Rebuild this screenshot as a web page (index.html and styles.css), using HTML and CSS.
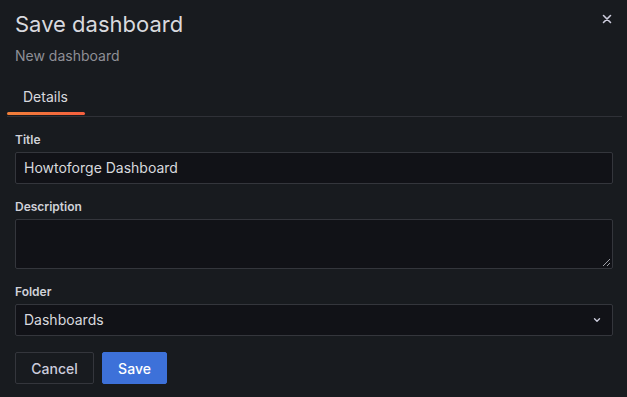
FILE: index.html
```html
<!DOCTYPE html>
<html>
<head>
<meta charset="utf-8">
<link rel="stylesheet" href="styles.css">
</head>
<body>
<div class="modal">
  <div class="header">
    <div class="heading">
      <h1 class="title">Save dashboard</h1>
      <div class="subtitle">New dashboard</div>
    </div>
    <button class="close" aria-label="Close">
      <svg width="10" height="10" viewBox="0 0 10 10"><path d="M1.5 1.5 L8.5 8.5 M8.5 1.5 L1.5 8.5" stroke="#ccccdc" stroke-width="1.6" stroke-linecap="round"/></svg>
    </button>
  </div>
  <div class="tabs">
    <div class="tab active">Details</div>
  </div>
  <form class="form">
    <div class="field">
      <label class="label">Title</label>
      <div class="input">Howtoforge Dashboard</div>
    </div>
    <div class="field">
      <label class="label">Description</label>
      <div class="textarea">
        <svg class="resize" width="10" height="10" viewBox="0 0 10 10"><path d="M9 2 L2 9 M9 6 L6 9" stroke="#9fa1a8" stroke-width="1"/></svg>
      </div>
    </div>
    <div class="field">
      <label class="label">Folder</label>
      <div class="input select">
        <span>Dashboards</span>
        <svg width="10" height="10" viewBox="0 0 10 10"><path d="M2.5 3.8 L5 6.3 L7.5 3.8" fill="none" stroke="#ccccdc" stroke-width="1.4" stroke-linecap="round" stroke-linejoin="round"/></svg>
      </div>
    </div>
    <div class="actions">
      <button type="button" class="btn secondary">Cancel</button>
      <button type="button" class="btn primary">Save</button>
    </div>
  </form>
</div>
</body>
</html>
```
FILE: styles.css
```css
* { box-sizing: border-box; }
html, body { margin: 0; padding: 0; }
body {
  background: #181b1f;
  font-family: Inter, "Noto Sans", sans-serif;
  color: #ccccdc;
  width: 627px;
  height: 397px;
  overflow: hidden;
}
.modal { padding: 0 14px 0 15px; }
.header {
  display: flex;
  justify-content: space-between;
  align-items: flex-start;
  height: 80px;
}
.title {
  margin: 10px 0 0;
  font-size: 22px;
  font-weight: 400;
  line-height: 28px;
  color: #d8d9de;
  letter-spacing: 0;
}
.subtitle {
  margin-top: 9px;
  font-size: 14px;
  line-height: 18px;
  color: #8e8f96;
}
.close {
  background: none;
  border: 0;
  padding: 0;
  margin: 13px 0 0 0;
  width: 12px;
  height: 12px;
  display: flex;
  align-items: center;
  justify-content: center;
}
.tabs {
  margin: 0 -9px 0 -8px;
  border-bottom: 1px solid #2f3137;
  display: flex;
  height: 37px;
}
.tab {
  position: relative;
  padding: 8px 16px 0;
  font-size: 14px;
  line-height: 18px;
  color: #d8d9de;
  width: 78px;
}
.tab.active::after {
  content: "";
  position: absolute;
  left: 0;
  right: 0;
  bottom: 1px;
  height: 3px;
  border-radius: 2px;
  background: linear-gradient(90deg, #f0803a, #f55f3e);
}
.form { padding-top: 15px; }
.field { margin-bottom: 15px; }
.label {
  display: block;
  font-size: 12px;
  font-weight: 600;
  line-height: 16px;
  color: #d0d1d8;
  margin-bottom: 4px;
}
.input, .textarea {
  background: #111217;
  border: 1px solid #34363c;
  border-radius: 2px;
  width: 598px;
}
.input {
  height: 32px;
  padding: 0 8px;
  font-size: 14px;
  line-height: 30px;
  color: #d8d9de;
}
.textarea {
  height: 50px;
  position: relative;
}
.resize { position: absolute; right: 1px; bottom: 1px; }
.select {
  display: flex;
  justify-content: space-between;
  align-items: center;
}
.select svg { margin-right: 2px; }
.actions {
  display: flex;
  gap: 8px;
  padding-top: 1px;
}
.btn {
  font-family: inherit;
  height: 32px;
  font-size: 14px;
  font-weight: 500;
  border-radius: 2px;
  padding: 0 15px;
}
.secondary {
  background: #181b1f;
  border: 1px solid #34363c;
  color: #ccccdc;
  width: 79px;
}
.primary {
  background: #3d71d9;
  border: 1px solid #3d71d9;
  color: #ffffff;
  width: 65px;
}
```
